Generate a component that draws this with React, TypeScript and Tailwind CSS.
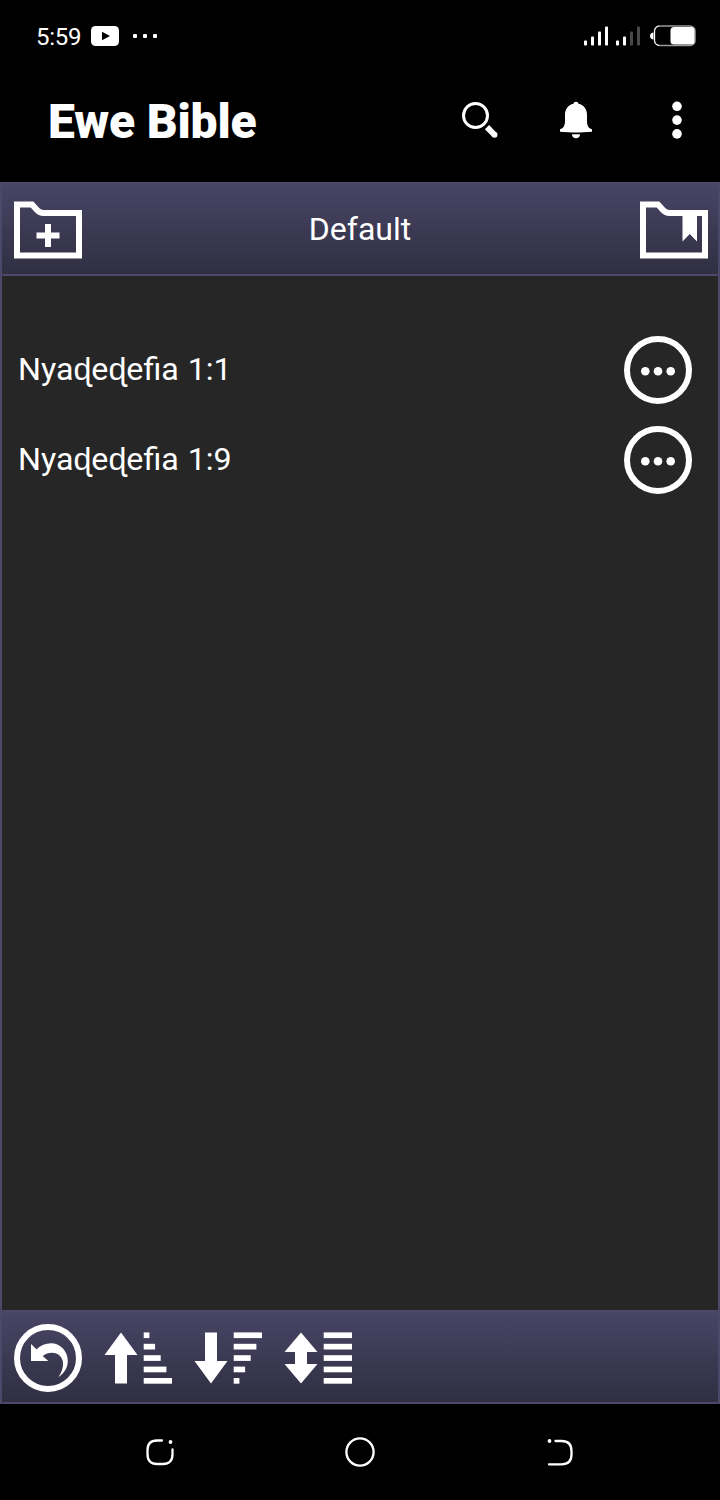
import React from 'react';

interface Bookmark {
  id: string;
  title: string;
}

const bookmarks: Bookmark[] = [
  { id: 'b1', title: 'Nyaɖeɖefia 1:1' },
  { id: 'b2', title: 'Nyaɖeɖefia 1:9' },
];

// Status bar icons
const VideoIcon = () => (
  <svg viewBox="0 0 28 20" className="w-7 h-5">
    <rect width="28" height="20" rx="4.5" fill="#fff" />
    <path d="M11 5.8v8.4l8-4.2z" fill="#000" />
  </svg>
);

const SignalIcon = ({ level }: { level: number }) => (
  <svg viewBox="0 0 24 20" className="w-6 h-5">
    {[5, 9, 14, 19].map((h, i) => (
      <rect key={h} x={i * 7} y={19.5 - h} width="3" height={h} rx="0.8" fill={i < level ? '#fff' : '#484848'} />
    ))}
  </svg>
);

const BatteryIcon = () => (
  <svg viewBox="0 0 46 22" className="w-[46px] h-[22px]">
    <path d="M3.5 7.5v7C1.5 14.5 0 13 0 11s1.5-3.5 3.5-3.5z" fill="#fff" />
    <rect x="4.5" y="1" width="40.5" height="19.5" rx="5" fill="#000" stroke="#9a9a9a" strokeWidth="1.5" />
    <path d="M9 20.5C6 20 4.5 18 4.5 15.5V6C4.5 3.5 6 1.5 9 1" fill="none" stroke="#fff" strokeWidth="1" />
    <rect x="20.5" y="2" width="24" height="17.5" rx="3.5" fill="#fff" />
  </svg>
);

// App bar icons
const SearchIcon = () => (
  <svg viewBox="0 0 36 38" className="w-9 h-[38px]" fill="none" stroke="#fff">
    <circle cx="13.5" cy="14.5" r="12" strokeWidth="3" />
    <path d="M25 26.2l7.2 7.3" strokeWidth="6" />
    <circle cx="32.5" cy="33.8" r="1.5" strokeWidth="3" />
  </svg>
);

const BellIcon = () => (
  <svg viewBox="0 0 32 38" className="w-8 h-[38px]" fill="#fff">
    <path d="M16 .8c1.5 0 2.2.9 2.5 2C24 4 27 8.3 27 13.8v6c0 5 1.5 7.5 5 8.5v2.4c-10 1-22 1-32 0v-2.4c3.5-1 5-3.5 5-8.5v-6C5 8.3 8 4 13.5 2.8c.3-1.1 1-2 2.5-2z" />
    <path d="M12 33.2h8c0 2.5-1.6 4-4 4s-4-1.5-4-4z" />
  </svg>
);

const MoreVerticalIcon = () => (
  <svg viewBox="0 0 10 38" className="w-[10px] h-[38px]" fill="#fff">
    <circle cx="5" cy="5.3" r="4.8" />
    <circle cx="5" cy="19.1" r="4.8" />
    <circle cx="5" cy="32.9" r="4.8" />
  </svg>
);

// Toolbar icons, all on a 68px grid
const folderPath = 'M3 8.5h15l5 5.5c2 2.2 4 3 6.5 3H65v42.5H3z';

const FolderPlusIcon = () => (
  <svg viewBox="0 0 68 68" className="w-[68px] h-[68px]">
    <path d={folderPath} fill="none" stroke="#fff" strokeWidth="6" />
    <path d="M34 28v23M22.5 39.5h23" stroke="#fff" strokeWidth="6" />
  </svg>
);

const FolderBookmarkIcon = () => (
  <svg viewBox="0 0 68 68" className="w-[68px] h-[68px]">
    <path d={folderPath} fill="none" stroke="#fff" strokeWidth="6" />
    <path d="M42.5 17H57v28.5l-7.25-7.5-7.25 7.5z" fill="#fff" />
  </svg>
);

const MoreCircleIcon = () => (
  <svg viewBox="0 0 68 68" className="w-[68px] h-[68px]">
    <circle cx="34" cy="34" r="31" fill="none" stroke="#fff" strokeWidth="6" />
    <circle cx="21.3" cy="35.3" r="4.3" fill="#fff" />
    <circle cx="34" cy="35.3" r="4.3" fill="#fff" />
    <circle cx="46.7" cy="35.3" r="4.3" fill="#fff" />
  </svg>
);

const UndoIcon = () => (
  <svg viewBox="0 0 68 68" className="w-[68px] h-[68px]">
    <circle cx="34" cy="34" r="31" fill="none" stroke="#fff" strokeWidth="6" />
    <path d="M17 20v17h17.3l-5.6-5c3-2.2 6-3.3 9.3-3.3 6 0 10.5 4 11 10 .4 5-1.5 10-4.7 14.500 6.500-4.500 9.500-10 9.500-16.200C53.800 27 46 19.300 37 19.300c-5.500 0-10.500 2-14.500 6z" fill="#fff" />
  </svg>
);

const SortBars = ({ widths }: { widths: number[] }) => (
  <>
    {widths.map((w, i) => (
      <rect key={i} x="39.7" y={8.4 + i * 11.4} width={w} height="5.7" />
    ))}
  </>
);

const SortAscIcon = () => (
  <svg viewBox="0 0 68 68" className="w-[68px] h-[68px]" fill="#fff">
    <path d="M17 8.5L33.5 31H23v28.5H11V31H.5z" />
    <SortBars widths={[5.7, 11.4, 17, 22.7, 28.3]} />
  </svg>
);

const SortDescIcon = () => (
  <svg viewBox="0 0 68 68" className="w-[68px] h-[68px]" fill="#fff">
    <path d="M17 59.5L33.5 37H23V8.5H11V37H.5z" />
    <SortBars widths={[28.3, 22.7, 17, 11.4, 5.7]} />
  </svg>
);

const SortManualIcon = () => (
  <svg viewBox="0 0 68 68" className="w-[68px] h-[68px]" fill="#fff">
    <path d="M17 8.5L33.5 28H23v12h10.5L17 59.5.5 40H11V28H.5z" />
    <SortBars widths={[28.3, 28.3, 28.3, 28.3, 28.3]} />
  </svg>
);

const StatusBar = () => (
  <div className="h-[72px] pl-9 pr-6 flex items-center justify-between">
    <div className="flex items-center">
      <span className="w-[55px] text-[24px] leading-7 tracking-[-0.25px] pt-[2px]">5:59</span>
      <VideoIcon />
      <div className="ml-[14px] flex gap-[6px]">
        <span className="w-1 h-1 rounded-[1px] bg-white" />
        <span className="w-1 h-1 rounded-[1px] bg-white" />
        <span className="w-1 h-1 rounded-[1px] bg-white" />
      </div>
    </div>
    <div className="flex items-center">
      <SignalIcon level={4} />
      <div className="w-2" />
      <SignalIcon level={2} />
      <div className="w-[10px]" />
      <BatteryIcon />
    </div>
  </div>
);

const AppBar = () => (
  <header className="h-[110px] pl-12 pr-[38px] flex items-start">
    <h1 className="grow text-[48px] leading-[56px] font-black tracking-[-0.15px] pt-[22px]">Ewe Bible</h1>
    <div className="flex pt-[29px]">
      <button aria-label="Search"><SearchIcon /></button>
      <button aria-label="Notifications" className="ml-[62px]"><BellIcon /></button>
      <button aria-label="More" className="ml-20"><MoreVerticalIcon /></button>
    </div>
  </header>
);

const NavBar = () => (
  <nav className="h-24 px-[145px] flex items-center justify-between">
    <svg viewBox="0 0 30 30" className="w-[30px] h-[30px]" fill="none" stroke="#fff" strokeWidth="2.3">
      <path d="M17 3.5h-5c-6 0-9.5 3.5-9.5 9.5v4c0 6.5 3 10 9.5 10h6c6.5 0 9.5-3.5 9.5-10v-4.5" strokeLinecap="round" />
      <circle cx="25.5" cy="5" r="1.9" fill="#fff" stroke="none" />
    </svg>
    <svg viewBox="0 0 30 30" className="w-[30px] h-[30px]" fill="none" stroke="#fff" strokeWidth="2.3">
      <circle cx="15" cy="15" r="13.6" />
    </svg>
    <svg viewBox="0 0 30 30" className="w-[30px] h-[30px]" fill="none" stroke="#fff" strokeWidth="2.3">
      <path d="M10.5 4h6c6.5 0 10 3.5 10 10v3.5c0 6.5-3.5 9.8-10 9.8H4" strokeLinecap="round" />
      <circle cx="4.5" cy="4" r="1.9" fill="#fff" stroke="none" />
    </svg>
  </nav>
);

const App: React.FC = () => {
  return (
    <div className="w-[720px] h-[1500px] bg-black text-white font-['Roboto',sans-serif] flex flex-col">
      <StatusBar />
      <AppBar />

      <main className="h-[1222px] flex flex-col border-2 border-[#4b4869] bg-[#262626]">
        <div className="h-[92px] shrink-0 pl-3 pr-[10px] pt-3 flex justify-between border-b-2 border-[#4b4869] bg-linear-to-b from-[#484565] to-[#302f42]">
          <FolderPlusIcon />
          <h2 className="text-[32px] leading-[66px] pr-[2px]">Default</h2>
          <FolderBookmarkIcon />
        </div>

        <ul className="grow pt-[49px]">
          {bookmarks.map((bookmark) => (
            <li key={bookmark.id} className="h-[90px] pl-4 pr-[26px] flex items-center justify-between">
              <span className="text-[32.2px] leading-10 [word-spacing:1px] pb-[2px]">{bookmark.title}</span>
              <button aria-label="Options"><MoreCircleIcon /></button>
            </li>
          ))}
        </ul>

        <div className="h-[92px] shrink-0 pl-3 pt-3 flex gap-[22px] border-t-2 border-[#4b4869] bg-linear-to-b from-[#484565] to-[#302f42]">
          <UndoIcon />
          <SortAscIcon />
          <SortDescIcon />
          <SortManualIcon />
        </div>
      </main>

      <NavBar />
    </div>
  );
};

export default App;
